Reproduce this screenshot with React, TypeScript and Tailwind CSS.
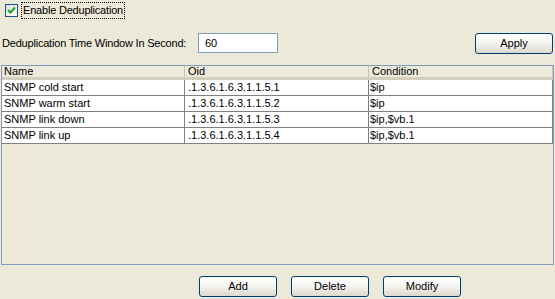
import React from 'react'

const rows = [
  { name: 'SNMP cold start', oid: '.1.3.6.1.6.3.1.1.5.1', condition: '$ip' },
  { name: 'SNMP warm start', oid: '.1.3.6.1.6.3.1.1.5.2', condition: '$ip' },
  { name: 'SNMP link down', oid: '.1.3.6.1.6.3.1.1.5.3', condition: '$ip,$vb.1' },
  { name: 'SNMP link up', oid: '.1.3.6.1.6.3.1.1.5.4', condition: '$ip,$vb.1' },
]

function XpButton({ label }: { label: string }) {
  return (
    <button className="flex h-[21px] w-[78px] items-center justify-center rounded-[3px] border border-[#003c74] bg-gradient-to-b from-[#ffffff] via-[#f3f3ef] to-[#dcd8cc] text-black">
      {label}
    </button>
  )
}

export default function App() {
  return (
    <div className="h-[299px] w-[555px] overflow-hidden bg-[#ece9d8] font-['Liberation_Sans',Tahoma,sans-serif] text-[11px] leading-none text-black">
      {/* enable checkbox */}
      <div className="flex h-[20px] items-center pl-[5px]">
        <span className="flex h-[13px] w-[13px] items-center justify-center border border-[#1c5180] bg-gradient-to-br from-[#dcdcd7] to-[#ffffff]">
          <svg width="9" height="9" viewBox="0 0 9 9">
            <path d="M1 4 L3.5 6.5 L8 1.5" fill="none" stroke="#21a121" strokeWidth="2" />
          </svg>
        </span>
        <span className="ml-[3px] border border-dotted border-black px-[1px] py-[2px] tracking-[-0.2px]">
          Enable Deduplication
        </span>
      </div>

      {/* time window */}
      <div className="mt-[12px] flex h-[22px] items-center pl-[2px] pr-[2px]">
        <span className="w-[196px] tracking-[-0.2px]">Deduplication Time Window In Second:</span>
        <input
          readOnly
          value="60"
          className="h-[20px] w-[80px] border border-[#7f9db9] bg-white px-[6px] text-[11px] outline-none"
        />
        <div className="ml-auto">
          <XpButton label="Apply" />
        </div>
      </div>

      {/* table */}
      <div className="mx-[1px] mt-[11px] h-[200px] border border-[#7f9db9] bg-[#ece9d8]">
        <div className="grid h-[14px] grid-cols-[183px_184px_1fr] border-b-[3px] border-[#d3cfbf] bg-[#ebeadb]">
          <div className="flex items-center border-r border-[#c7c5b2] pl-[2px]">Name</div>
          <div className="flex items-center border-r border-[#c7c5b2] pl-[3px]">Oid</div>
          <div className="flex items-center border-r border-[#c7c5b2] pl-[3px]">Condition</div>
        </div>
        {rows.map((r) => (
          <div
            key={r.name}
            className="grid h-[16px] grid-cols-[183px_184px_1fr] border-b border-[#808080] bg-white"
          >
            <div className="flex items-center border-r border-[#808080] pl-[2px]">{r.name}</div>
            <div className="flex items-center border-r border-[#808080] pl-[3px]">{r.oid}</div>
            <div className="flex items-center border-r border-[#808080] pl-[1px]">{r.condition}</div>
          </div>
        ))}
      </div>

      {/* actions */}
      <div className="mt-[11px] flex gap-[14px] pl-[199px]">
        <XpButton label="Add" />
        <XpButton label="Delete" />
        <XpButton label="Modify" />
      </div>
    </div>
  )
}
